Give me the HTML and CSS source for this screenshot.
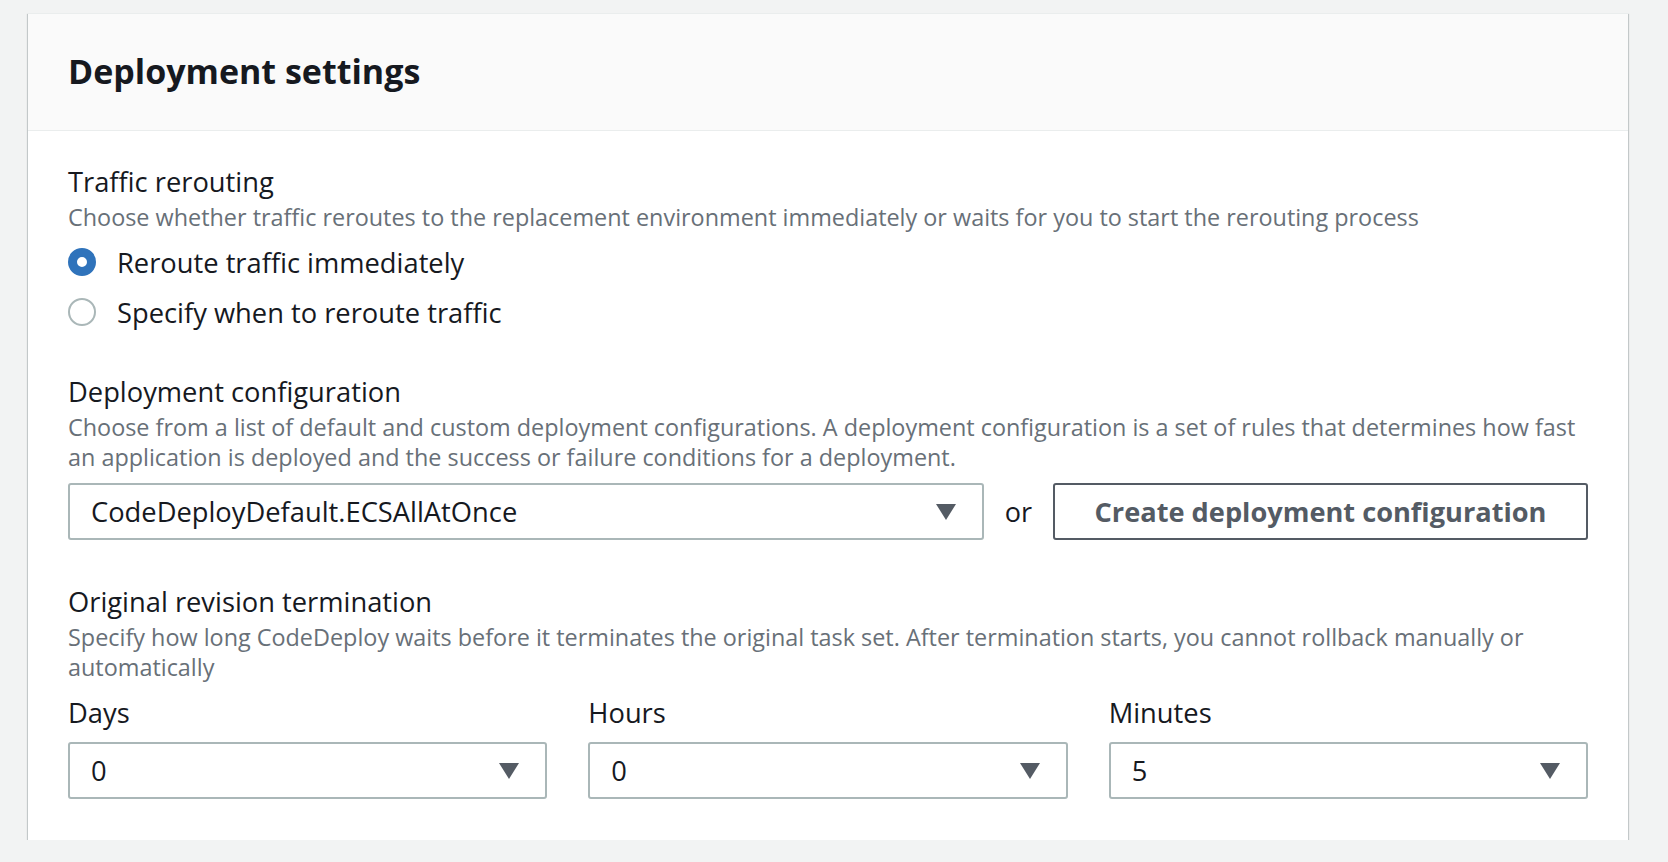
FILE: index.html
```html
<!DOCTYPE html>
<html lang="en">
<head>
<meta charset="utf-8">
<title>Deployment settings</title>
<link rel="stylesheet" href="styles.css">
</head>
<body>
<section class="card">
  <header class="card-header">
    <h2 class="card-title">Deployment settings</h2>
  </header>
  <div class="card-body">
    <div class="field">
      <div class="label">Traffic rerouting</div>
      <div class="desc">Choose whether traffic reroutes to the replacement environment immediately or waits for you to start the rerouting process</div>
      <div class="radios">
        <label class="radio"><span class="dot checked"></span><span class="radio-text">Reroute traffic immediately</span></label>
        <label class="radio"><span class="dot"></span><span class="radio-text">Specify when to reroute traffic</span></label>
      </div>
    </div>
    <div class="field field-config">
      <div class="label">Deployment configuration</div>
      <div class="desc">Choose from a list of default and custom deployment configurations. A deployment configuration is a set of rules that determines how fast an application is deployed and the success or failure conditions for a deployment.</div>
      <div class="config-row">
        <div class="select select-wide"><span class="select-value">CodeDeployDefault.ECSAllAtOnce</span><span class="caret"></span></div>
        <span class="or">or</span>
        <button class="btn">Create deployment configuration</button>
      </div>
    </div>
    <div class="field field-term">
      <div class="label">Original revision termination</div>
      <div class="desc">Specify how long CodeDeploy waits before it terminates the original task set. After termination starts, you cannot rollback manually or automatically</div>
      <div class="term-grid">
        <div class="term-col">
          <div class="label sub">Days</div>
          <div class="select"><span class="select-value">0</span><span class="caret"></span></div>
        </div>
        <div class="term-col">
          <div class="label sub">Hours</div>
          <div class="select"><span class="select-value">0</span><span class="caret"></span></div>
        </div>
        <div class="term-col">
          <div class="label sub">Minutes</div>
          <div class="select"><span class="select-value">5</span><span class="caret"></span></div>
        </div>
      </div>
    </div>
  </div>
</section>
</body>
</html>
```

FILE: styles.css
```css
html, body {
  margin: 0;
  padding: 0;
  background: #f2f3f3;
}
body {
  font-family: "Open Sans", "Noto Sans", sans-serif;
  color: #16191f;
  padding: 13px 0 0 28px;
}
.card {
  width: 1600px;
  background: #ffffff;
  box-shadow: 0 1px 1px 0 rgba(0, 28, 36, 0.3), 1px 1px 1px 0 rgba(0, 28, 36, 0.15), -1px 1px 1px 0 rgba(0, 28, 36, 0.15);
  border-top: 1px solid #eaeded;
}
.card-header {
  background: #fafafa;
  border-bottom: 1px solid #eaeded;
  padding: 37px 40px 38px;
}
.card-title {
  margin: 0;
  font-size: 34px;
  line-height: 41px;
  font-weight: 700;
  color: #16191f;
}
.card-body {
  padding: 30px 40px 41px;
}
.label {
  font-size: 27.3px;
  line-height: 41px;
  color: #16191f;
}
.desc {
  font-size: 23.4px;
  line-height: 30px;
  color: #687078;
}
.radios {
  margin-top: 5px;
  display: flex;
  flex-direction: column;
}
.radio {
  display: flex;
  align-items: center;
  height: 50px;
  gap: 21px;
}
.dot {
  box-sizing: border-box;
  width: 28px;
  height: 28px;
  border-radius: 50%;
  border: 2px solid #aab7b8;
  background: #fff;
}
.dot.checked {
  border: 9px solid #2f73bb;
}
.radio-text {
  font-size: 27.3px;
  line-height: 41px;
  color: #16191f;
}
.field-config {
  margin-top: 34px;
}
.config-row {
  margin-top: 11px;
  display: flex;
  align-items: center;
}
.select {
  box-sizing: border-box;
  height: 57px;
  border: 2px solid #aab7b8;
  border-radius: 3px;
  background: #fff;
  display: flex;
  align-items: center;
  justify-content: space-between;
  padding: 0 26px 0 21px;
}
.select-wide {
  flex: 1;
}
.select-value {
  font-size: 27.3px;
  color: #16191f;
}
.caret {
  width: 0;
  height: 0;
  border-left: 10.5px solid transparent;
  border-right: 10.5px solid transparent;
  border-top: 16px solid #545b64;
}
.or {
  font-size: 27px;
  color: #16191f;
  margin: 0 21px 0 21px;
}
.btn {
  box-sizing: border-box;
  flex: 0 0 535px;
  height: 57px;
  border: 2px solid #545b64;
  border-radius: 3px;
  background: #fff;
  font-family: inherit;
  font-size: 27.2px;
  font-weight: 700;
  color: #545b64;
  padding: 0;
}
.field-term {
  margin-top: 41px;
}
.term-grid {
  margin-top: 10px;
  display: grid;
  grid-template-columns: repeat(3, 1fr);
  column-gap: 41px;
}
.term-col .select {
  margin-top: 9px;
}
```
